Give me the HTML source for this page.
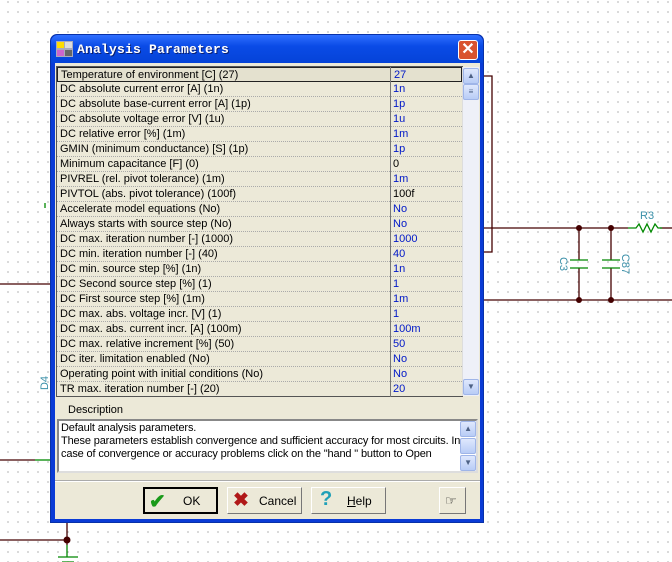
<!DOCTYPE html>
<html><head><style>
*{margin:0;padding:0;box-sizing:border-box}
body{width:672px;height:562px;overflow:hidden;position:relative;background:#fff;
background-image:radial-gradient(circle,#b8b8b8 0.7px,transparent 0.9px);background-size:10px 10px;background-position:3px 7px;
font-family:"Liberation Sans",sans-serif;font-size:11px}
.abs{position:absolute}
#dlg{left:50px;top:34px;width:434px;height:489px;background:#0a3bd6;border-radius:7px 7px 0 0;border:1px solid #0831a8}
#title{left:0;top:0;width:432px;height:28px;background:linear-gradient(#2f6fff,#0a4be6 40%,#0543d8);border-radius:7px 7px 0 0}
#title span{position:absolute;left:26px;top:7px;color:#fff;font-family:"Liberation Mono",monospace;font-weight:bold;font-size:13px;text-shadow:1px 1px #0a1f70;letter-spacing:0.2px}
#close{left:407px;top:5px;width:20px;height:20px;background:#d9532f;border:1px solid #fff;border-radius:3px;color:#fff;font-size:16px;font-weight:bold;text-align:center;line-height:18px}
#body{left:4px;top:28px;width:425px;height:456px;background:#ece9d8}
#tbl{left:1px;top:3px;width:407px;height:331px;border:1px solid #555;background:#ece9d8}
.r{position:absolute;left:0;width:405px;height:15px;border-bottom:1px dotted #aaa;font-size:11px;line-height:14px}
.r .n{position:absolute;left:3px;color:#000;white-space:nowrap}
.r .v{position:absolute;left:336px;color:#0018c8}
#vline{left:333px;top:0;width:1px;height:330px;background:#777}
.sb{background:#eef0f8;border-left:1px solid #ddd}
.btnS{position:absolute;width:16px;height:16px;background:linear-gradient(#dfe8fd,#b8ccf6);border:1px solid #9fb5e8;border-radius:2px;color:#4d6185;font-size:8px;text-align:center;line-height:14px}
.btn{position:absolute;top:452px;height:27px;background:#ece9d8;border:1px solid #fff;border-right-color:#777;border-bottom-color:#777;font-size:12px}
</style></head><body>
<svg class="abs" style="left:0;top:0" width="672" height="562">
<g stroke="#400" stroke-width="1.3" fill="none">
<path d="M484 76H492V252H484"/>
<path d="M484 228H628"/><path d="M660 228H672"/>
<path d="M484 300H672"/>
<path d="M0 284H50"/><path d="M0 460H35"/>
<path d="M0 540H67"/><path d="M67 523V545"/>
<path d="M579 228V260M579 268V300M611 228V260M611 268V300"/>
</g>
<g fill="#400"><circle cx="579" cy="228" r="3"/><circle cx="611" cy="228" r="3"/><circle cx="579" cy="300" r="3"/><circle cx="611" cy="300" r="3"/><circle cx="67" cy="540" r="3.5"/></g>
<g stroke="#080" stroke-width="1.3" fill="none">
<path d="M570 260H588M570 268H588M602 260H620M602 268H620"/>
<path d="M628 228h8l3-4 4 8 4-8 4 8 4-8 3 4h4"/>
<path d="M35 460H50"/><path d="M58 557h20M62 562h12M67 545V557"/>
<path d="M45 203v5"/>
</g>
<g fill="#3a8fa8" font-family="Liberation Sans" font-size="11">
<text x="640" y="219">R3</text>
<text transform="translate(560,264) rotate(90)" text-anchor="middle">C3</text>
<text transform="translate(622,264) rotate(90)" text-anchor="middle">C87</text>
<text transform="translate(48,383) rotate(-90)" text-anchor="middle">D4</text>
</g>
</svg>
<div id="dlg" class="abs">
<div id="title" class="abs"><svg class="abs" style="left:5px;top:6px" width="17" height="16"><rect width="17" height="16" fill="#aab"/><rect x="1" y="1" width="7" height="6" fill="#ffdd00"/><rect x="9" y="1" width="7" height="6" fill="#ddd"/><rect x="1" y="9" width="7" height="6" fill="#c6c"/><rect x="9" y="9" width="7" height="6" fill="#666"/></svg><span>Analysis Parameters</span>
<div id="close" class="abs">✕</div></div>
<div id="body" class="abs">
<div id="tbl" class="abs">
<div class="r" style="top:0;background:#e4e1cf;border:1px solid #222"><span class="n">Temperature of environment [C]  (27)</span><span class="v">27</span></div>
<div class="r" style="top:15px"><span class="n">DC absolute current error [A]  (1n)</span><span class="v">1n</span></div>
<div class="r" style="top:30px"><span class="n">DC absolute base-current error [A]  (1p)</span><span class="v">1p</span></div>
<div class="r" style="top:45px"><span class="n">DC absolute voltage error [V]  (1u)</span><span class="v">1u</span></div>
<div class="r" style="top:60px"><span class="n">DC relative error [%]  (1m)</span><span class="v">1m</span></div>
<div class="r" style="top:75px"><span class="n">GMIN (minimum conductance) [S]  (1p)</span><span class="v">1p</span></div>
<div class="r" style="top:90px"><span class="n">Minimum capacitance [F]  (0)</span><span class="v" style="color:#000">0</span></div>
<div class="r" style="top:105px"><span class="n">PIVREL (rel. pivot tolerance)  (1m)</span><span class="v">1m</span></div>
<div class="r" style="top:120px"><span class="n">PIVTOL (abs. pivot tolerance)  (100f)</span><span class="v" style="color:#000">100f</span></div>
<div class="r" style="top:135px"><span class="n">Accelerate model equations  (No)</span><span class="v">No</span></div>
<div class="r" style="top:150px"><span class="n">Always starts with source step  (No)</span><span class="v">No</span></div>
<div class="r" style="top:165px"><span class="n">DC max. iteration number [-]  (1000)</span><span class="v">1000</span></div>
<div class="r" style="top:180px"><span class="n">DC min. iteration number [-]  (40)</span><span class="v">40</span></div>
<div class="r" style="top:195px"><span class="n">DC min. source step [%]  (1n)</span><span class="v">1n</span></div>
<div class="r" style="top:210px"><span class="n">DC Second source step [%]  (1)</span><span class="v">1</span></div>
<div class="r" style="top:225px"><span class="n">DC First source step [%]  (1m)</span><span class="v">1m</span></div>
<div class="r" style="top:240px"><span class="n">DC max. abs. voltage incr. [V]  (1)</span><span class="v">1</span></div>
<div class="r" style="top:255px"><span class="n">DC max. abs. current incr. [A]  (100m)</span><span class="v">100m</span></div>
<div class="r" style="top:270px"><span class="n">DC max. relative increment [%]  (50)</span><span class="v">50</span></div>
<div class="r" style="top:285px"><span class="n">DC iter. limitation enabled  (No)</span><span class="v">No</span></div>
<div class="r" style="top:300px"><span class="n">Operating point with initial conditions  (No)</span><span class="v">No</span></div>
<div class="r" style="top:315px;border:none"><span class="n">TR max. iteration number [-]  (20)</span><span class="v">20</span></div>
<div id="vline" class="abs"></div>
<div class="abs sb" style="left:405px;top:0;width:17px;height:329px"></div>
<div class="btnS" style="left:406px;top:1px">▲</div>
<div class="btnS" style="left:406px;top:17px">≡</div>
<div class="btnS" style="left:406px;top:312px">▼</div>
</div>
<div class="abs" style="left:13px;top:341px;font-size:11px">Description</div>
<div class="abs" style="left:2px;top:356px;width:421px;height:54px;background:#fff;border:2px solid #888;border-right-color:#ddd;border-bottom-color:#ddd;font-size:11px;line-height:13px;padding:1px 2px;white-space:nowrap;overflow:hidden;letter-spacing:-0.15px">Default analysis parameters.<br>These parameters establish convergence and sufficient accuracy for most circuits. In<br>case of convergence or accuracy problems click on the "hand " button to Open
<div class="btnS" style="left:401px;top:0">▲</div><div class="btnS" style="left:401px;top:17px"></div><div class="btnS" style="left:401px;top:34px">▼</div></div>
<div class="abs" style="left:0;top:417px;width:425px;height:2px;border-top:1px solid #aaa;border-bottom:1px solid #fff"></div>
<div class="btn" style="left:88px;width:75px;border:2px solid #000;top:424px"><span style="position:absolute;left:4px;top:0;color:#1a9a1a;font-size:20px;font-weight:bold">✔</span><span style="position:absolute;left:38px;top:5px">OK</span></div>
<div class="btn" style="left:172px;width:75px;top:424px"><span style="position:absolute;left:5px;top:1px;color:#b01818;font-size:19px;font-weight:bold">✖</span><span style="position:absolute;left:31px;top:6px">Cancel</span></div>
<div class="btn" style="left:256px;width:75px;top:424px"><span style="position:absolute;left:8px;top:0;color:#20a0b8;font-size:20px;font-weight:bold">?</span><span style="position:absolute;left:35px;top:6px"><u>H</u>elp</span></div>
<div class="btn" style="left:384px;width:27px;top:424px"><span style="position:absolute;left:5px;top:5px;font-size:13px">☞</span></div>
</div>
</div>
</body></html>
